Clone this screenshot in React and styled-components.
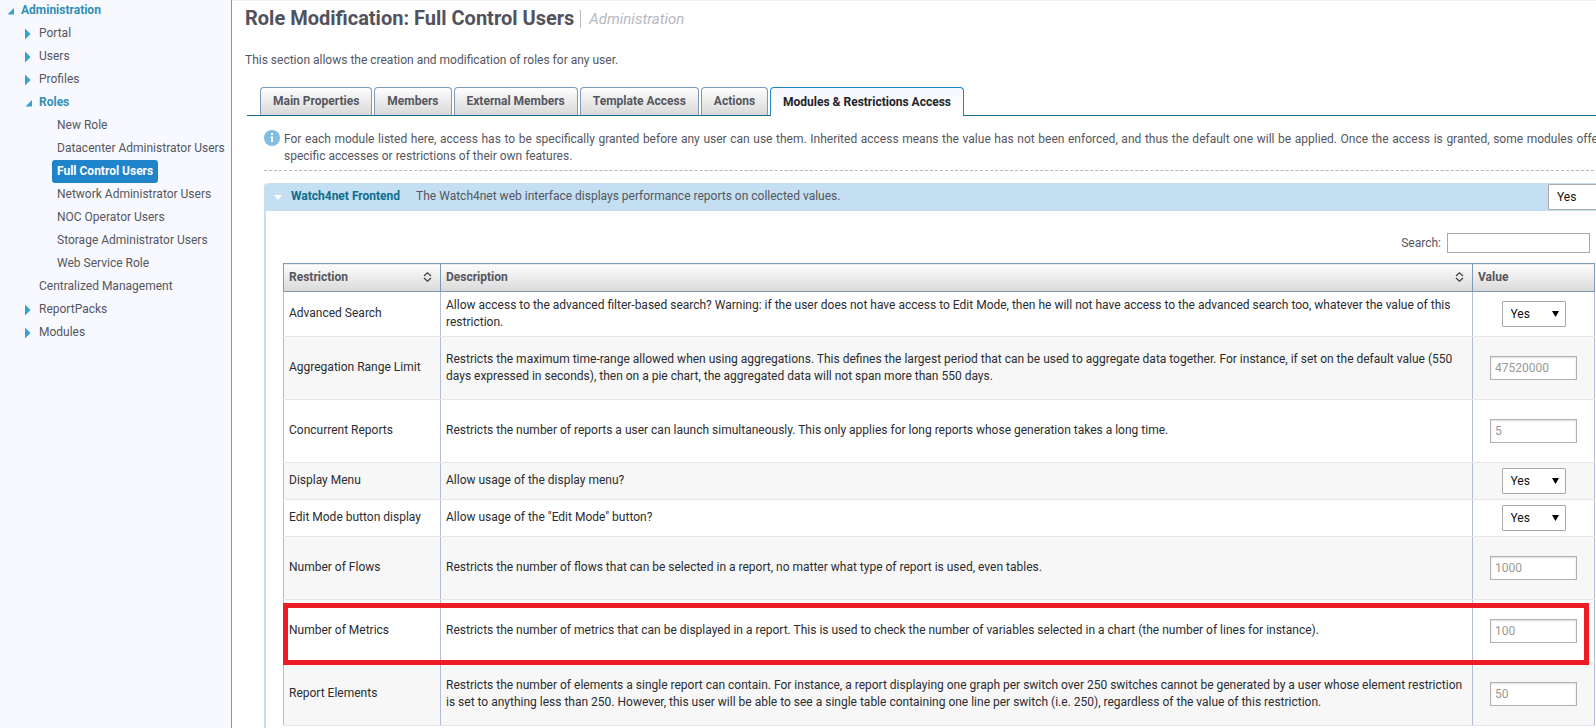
import React from 'react'
import { styled, createGlobalStyle, css } from 'styled-components'

const GlobalStyle = createGlobalStyle`
  * {
    box-sizing: border-box;
  }

  body {
    margin: 0;
    background-color: #fff;
    color: #55565f;
    font-family: Roboto, 'Liberation Sans', sans-serif;
    font-size: 12px;
    line-height: 17px;
  }
`

const Page = styled.div`
  display: flex;
  height: 100vh;
  overflow: hidden;
`

/* tree menu */

const Sidebar = styled.nav`
  flex: none;
  width: 232px;
  background-color: #f7f9fe;
  border-right: 1px solid #7b9ab8;
  white-space: nowrap;
`

const Tree = styled.ul`
  list-style: none;
  margin: 0;
  padding: 0;
`

const TreeRow = styled.li`
  display: flex;
  align-items: center;
  height: 23px;
  padding-bottom: 2px;
  padding-left: ${(props) => props.$level * 18 + 7}px;
`

const Toggle = styled.svg`
  flex: none;
  width: 8px;
  height: 12px;
  margin-right: 6px;
`

const TreeLink = styled.a`
  color: ${(props) => (props.$open ? '#3090b5' : '#55565f')};
  font-weight: ${(props) => (props.$open ? 700 : 400)};
  text-decoration: none;

  ${(props) =>
    props.$selected &&
    css`
      margin-left: -5px;
      padding: 3px 5px;
      border-radius: 3px;
      background-color: #2084cb;
      color: #fff;
      font-weight: 700;
    `}
`

/* page */

const Main = styled.main`
  flex: 1;
  min-width: 0;
  overflow: hidden;
  border-top: 1px solid #f2f2f4;
`

// the panels run slightly past the right edge of the window
const Content = styled.div`
  margin-right: -18px;
  padding: 3px 0 0 13px;
`

const Header = styled.header`
  display: flex;
  align-items: center;
  gap: 6px;
  height: 28px;
`

const Title = styled.h1`
  margin: 0;
  color: #51525d;
  font-size: 20px;
  line-height: 28px;
`

const Subtitle = styled.span`
  margin-top: 2px;
  padding-left: 8px;
  border-left: 1px solid #b9bbc3;
  color: #b6b8c0;
  font-size: 15px;
  font-style: italic;
  line-height: 18px;
`

const Intro = styled.p`
  margin: 20px 0 18px;
`

const Tabs = styled.div`
  display: flex;
  gap: 2px;
  height: 29px;
  margin-left: 2px;
  padding-left: 13px;
  border-bottom: 1px solid #14698f;
`

const Tab = styled.button`
  height: ${(props) => (props.$active ? 29 : 28)}px;
  padding: 0 12px;
  border: 1px solid ${(props) => (props.$active ? '#2084c4' : '#7b9ab8')};
  border-bottom: 0;
  border-radius: 4px 4px 0 0;
  background: ${(props) =>
    props.$active ? 'linear-gradient(#f5f8fe, #fff)' : 'linear-gradient(#fefefe, #d8d8d8)'};
  color: ${(props) => (props.$active ? '#222328' : '#55565f')};
  font: 700 12px/17px Roboto, sans-serif;
  white-space: nowrap;
`

const Info = styled.div`
  display: flex;
  gap: 4px;
  margin: 14px 0 12px 19px;
  padding: 0 12px 5px 0;
  border-bottom: 1px dashed #b5b5c0;
`

const InfoIcon = styled.svg`
  flex: none;
  width: 16px;
  height: 16px;
`

const InfoText = styled.p`
  margin: 1px 0 0;
  text-align: justify;
`

const Panel = styled.section`
  margin-left: 19px;
  border: 2px solid #c3dff1;
  border-top: 0;
  border-radius: 4px 4px 0 0;
`

const PanelHeader = styled.div`
  display: flex;
  align-items: center;
  height: 28px;
  padding-left: 8px;
  border-radius: 4px 4px 0 0;
  background-color: #c3dff1;
`

const PanelArrow = styled.svg`
  width: 8px;
  height: 5px;
  margin-right: 9px;
`

const PanelTitle = styled.h2`
  margin: 0;
  padding-bottom: 2px;
  color: #0d6d8f;
  font-size: 12px;
  line-height: 17px;
`

const PanelText = styled.span`
  flex: 1;
  margin-left: 16px;
  padding-bottom: 2px;
`

const PanelBody = styled.div`
  padding: 22px 17px;
`

const SearchBar = styled.label`
  display: flex;
  justify-content: flex-end;
  align-items: center;
  gap: 6px;
  margin-bottom: 10px;
  padding-right: 5px;
`

const SearchInput = styled.input`
  width: 143px;
  height: 20px;
  border: 1px solid #a9a9a9;
  background-color: #fff;
`

const SelectBox = styled.span`
  position: relative;
  display: inline-block;
  vertical-align: middle;
`

const SelectInput = styled.select`
  display: block;
  appearance: none;
  width: 64px;
  height: 26px;
  padding: 0 8px;
  border: 1px solid #a9a9a9;
  border-radius: 1px;
  background-color: #fff;
  color: #111;
  font: 12px/17px Roboto, sans-serif;
`

const SelectArrow = styled.svg`
  position: absolute;
  top: 10px;
  right: 7px;
  width: 7px;
  height: 6px;
  pointer-events: none;
`

/* restrictions */

const Table = styled.table`
  width: 100%;
  table-layout: fixed;
  border-collapse: collapse;
  color: #2b2c30;
`

const Th = styled.th`
  width: ${(props) => props.$width || 'auto'};
  height: 28px;
  padding: 0 5px 1px;
  border: 1px solid #7b9ab8;
  background: linear-gradient(#fdfdfd, #d9d9d9);
  color: #55565f;
  text-align: left;
`

const ThInner = styled.div`
  display: flex;
  justify-content: space-between;
  align-items: center;
  padding-right: 3px;
`

const SortIcon = styled.svg`
  width: 9px;
  height: 10px;
`

const Row = styled.tr`
  height: ${(props) => props.$height}px;

  &:nth-child(even) {
    background-color: #f7f7f7;
  }

  ${(props) =>
    props.$highlight &&
    css`
      position: relative;
      z-index: 1;
    `}
`

const Td = styled.td`
  padding: 0 5px 1px;
  border: 1px solid #b3bcd6;
  border-top-color: #e6e6e8;
  border-bottom-color: #e6e6e8;
`

const ValueTd = styled(Td)`
  padding: 0 5px;
  text-align: center;
`

const ValueInput = styled.input`
  width: 87px;
  height: 24px;
  padding: 0 4px;
  border: 1px solid #b0b0b0;
  background-color: #fff;
  box-shadow: inset 0 1px 2px #ddd;
  color: #999;
  font: 12px/17px Roboto, sans-serif;
  vertical-align: middle;
`

const Highlight = styled.span`
  position: absolute;
  top: 3px;
  right: 6px;
  bottom: -2px;
  left: -1px;
  border: 5px solid #ed1c24;
  pointer-events: none;
`

const menu = [
  { label: 'Administration', level: 0, icon: 'open' },
  { label: 'Portal', level: 1, icon: 'closed' },
  { label: 'Users', level: 1, icon: 'closed' },
  { label: 'Profiles', level: 1, icon: 'closed' },
  { label: 'Roles', level: 1, icon: 'open' },
  { label: 'New Role', level: 2 },
  { label: 'Datacenter Administrator Users', level: 2 },
  { label: 'Full Control Users', level: 2, selected: true },
  { label: 'Network Administrator Users', level: 2 },
  { label: 'NOC Operator Users', level: 2 },
  { label: 'Storage Administrator Users', level: 2 },
  { label: 'Web Service Role', level: 2 },
  { label: 'Centralized Management', level: 1 },
  { label: 'ReportPacks', level: 1, icon: 'closed' },
  { label: 'Modules', level: 1, icon: 'closed' },
]

const tabs = [
  'Main Properties',
  'Members',
  'External Members',
  'Template Access',
  'Actions',
  'Modules & Restrictions Access',
]

const restrictions = [
  {
    name: 'Advanced Search',
    text: 'Allow access to the advanced filter-based search? Warning: if the user does not have access to Edit Mode, then he will not have access to the advanced search too, whatever the value of this restriction.',
    height: 45,
  },
  {
    name: 'Aggregation Range Limit',
    text: 'Restricts the maximum time-range allowed when using aggregations. This defines the largest period that can be used to aggregate data together. For instance, if set on the default value (550 days expressed in seconds), then on a pie chart, the aggregated data will not span more than 550 days.',
    value: '47520000',
    height: 63,
  },
  {
    name: 'Concurrent Reports',
    text: 'Restricts the number of reports a user can launch simultaneously. This only applies for long reports whose generation takes a long time.',
    value: '5',
    height: 63,
  },
  { name: 'Display Menu', text: 'Allow usage of the display menu?', height: 37 },
  { name: 'Edit Mode button display', text: 'Allow usage of the "Edit Mode" button?', height: 37 },
  {
    name: 'Number of Flows',
    text: 'Restricts the number of flows that can be selected in a report, no matter what type of report is used, even tables.',
    value: '1000',
    height: 63,
  },
  {
    name: 'Number of Metrics',
    text: 'Restricts the number of metrics that can be displayed in a report. This is used to check the number of variables selected in a chart (the number of lines for instance).',
    value: '100',
    height: 63,
    highlight: true,
  },
  {
    name: 'Report Elements',
    text: 'Restricts the number of elements a single report can contain. For instance, a report displaying one graph per switch over 250 switches cannot be generated by a user whose element restriction is set to anything less than 250. However, this user will be able to see a single table containing one line per switch (i.e. 250), regardless of the value of this restriction.',
    value: '50',
    height: 63,
  },
]

const TreeIcon = ({ icon }) => (
  <Toggle viewBox="0 0 8 12" aria-hidden="true">
    {icon === 'open' && <path d="M7 3V9.5H0.5Z" fill="#36a0d3" />}
    {icon === 'closed' && <path d="M0 0.5L5.5 6L0 11.5Z" fill="#36a0d3" />}
  </Toggle>
)

const Sort = () => (
  <SortIcon viewBox="0 0 9 10" fill="none" stroke="#44454d" strokeWidth="1.3" aria-hidden="true">
    <path d="M1 4L4.5 0.8L8 4M1 6L4.5 9.2L8 6" />
  </SortIcon>
)

const YesNo = ({ label }) => (
  <SelectBox>
    <SelectInput aria-label={label} defaultValue="Yes">
      <option>Yes</option>
      <option>No</option>
    </SelectInput>
    <SelectArrow viewBox="0 0 7 6" aria-hidden="true">
      <path d="M0 0H7L3.5 6Z" fill="#000" />
    </SelectArrow>
  </SelectBox>
)

const App = () => {
  return (
    <Page>
      <GlobalStyle />
      <Sidebar>
        <Tree>
          {menu.map((item) => (
            <TreeRow key={item.label} $level={item.level}>
              <TreeIcon icon={item.icon} />
              <TreeLink href="#" $open={item.icon === 'open'} $selected={item.selected}>
                {item.label}
              </TreeLink>
            </TreeRow>
          ))}
        </Tree>
      </Sidebar>
      <Main>
        <Content>
          <Header>
            <Title>Role Modification: Full Control Users</Title>
            <Subtitle>Administration</Subtitle>
          </Header>
          <Intro>This section allows the creation and modification of roles for any user.</Intro>
          <Tabs>
            {tabs.map((tab, i) => (
              <Tab key={tab} type="button" $active={i === tabs.length - 1}>
                {tab}
              </Tab>
            ))}
          </Tabs>
          <Info>
            <InfoIcon viewBox="0 0 16 16" aria-hidden="true">
              <circle cx="8" cy="8" r="8" fill="#80bde0" />
              <path d="M7 3H9V5H7ZM6.5 6.5H9V12H7V7.5H6.5Z" fill="#fff" />
            </InfoIcon>
            <InfoText>
              For each module listed here, access has to be specifically granted before any user can use
              them. Inherited access means the value has not been enforced, and thus the default one will
              be applied. Once the access is granted, some modules offer specific accesses or restrictions
              of their own features.
            </InfoText>
          </Info>
          <Panel>
            <PanelHeader>
              <PanelArrow viewBox="0 0 8 5" aria-hidden="true">
                <path d="M0 0H8L4 5Z" fill="#fff" />
              </PanelArrow>
              <PanelTitle>Watch4net Frontend</PanelTitle>
              <PanelText>
                The Watch4net web interface displays performance reports on collected values.
              </PanelText>
              <YesNo label="Watch4net Frontend access" />
            </PanelHeader>
            <PanelBody>
              <SearchBar>
                Search:
                <SearchInput type="text" />
              </SearchBar>
              <Table>
                <thead>
                  <tr>
                    <Th $width="157px">
                      <ThInner>
                        Restriction <Sort />
                      </ThInner>
                    </Th>
                    <Th>
                      <ThInner>
                        Description <Sort />
                      </ThInner>
                    </Th>
                    <Th $width="122px">Value</Th>
                  </tr>
                </thead>
                <tbody>
                  {restrictions.map((item) => (
                    <Row key={item.name} $height={item.height} $highlight={item.highlight}>
                      <Td>
                        {item.name}
                        {item.highlight && <Highlight />}
                      </Td>
                      <Td>{item.text}</Td>
                      <ValueTd>
                        {item.value ? (
                          <ValueInput type="text" aria-label={item.name} defaultValue={item.value} />
                        ) : (
                          <YesNo label={item.name} />
                        )}
                      </ValueTd>
                    </Row>
                  ))}
                </tbody>
              </Table>
            </PanelBody>
          </Panel>
        </Content>
      </Main>
    </Page>
  )
}

export default App
